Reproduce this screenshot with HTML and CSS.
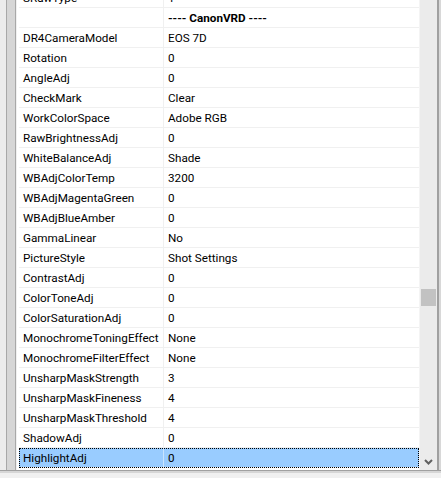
FILE: index.html
```html
<!DOCTYPE html>
<html>
<head>
<meta charset="utf-8">
<link rel="stylesheet" href="styles.css">
</head>
<body>
<div class="window">
  <div class="main">
    <div class="gutter"><div class="g-outer"></div><div class="g-inner"></div></div>
    <div class="list">
      <div class="rows">
        <div class="row"><div class="name">SRawType</div><div class="val">1</div></div>
        <div class="row"><div class="name"></div><div class="val header">---- CanonVRD ----</div></div>
        <div class="row"><div class="name">DR4CameraModel</div><div class="val">EOS 7D</div></div>
        <div class="row"><div class="name">Rotation</div><div class="val">0</div></div>
        <div class="row"><div class="name">AngleAdj</div><div class="val">0</div></div>
        <div class="row"><div class="name">CheckMark</div><div class="val">Clear</div></div>
        <div class="row"><div class="name">WorkColorSpace</div><div class="val">Adobe RGB</div></div>
        <div class="row"><div class="name">RawBrightnessAdj</div><div class="val">0</div></div>
        <div class="row"><div class="name">WhiteBalanceAdj</div><div class="val">Shade</div></div>
        <div class="row"><div class="name">WBAdjColorTemp</div><div class="val">3200</div></div>
        <div class="row"><div class="name">WBAdjMagentaGreen</div><div class="val">0</div></div>
        <div class="row"><div class="name">WBAdjBlueAmber</div><div class="val">0</div></div>
        <div class="row"><div class="name">GammaLinear</div><div class="val">No</div></div>
        <div class="row"><div class="name">PictureStyle</div><div class="val">Shot Settings</div></div>
        <div class="row"><div class="name">ContrastAdj</div><div class="val">0</div></div>
        <div class="row"><div class="name">ColorToneAdj</div><div class="val">0</div></div>
        <div class="row"><div class="name">ColorSaturationAdj</div><div class="val">0</div></div>
        <div class="row"><div class="name">MonochromeToningEffect</div><div class="val">None</div></div>
        <div class="row"><div class="name">MonochromeFilterEffect</div><div class="val">None</div></div>
        <div class="row"><div class="name">UnsharpMaskStrength</div><div class="val">3</div></div>
        <div class="row"><div class="name">UnsharpMaskFineness</div><div class="val">4</div></div>
        <div class="row"><div class="name">UnsharpMaskThreshold</div><div class="val">4</div></div>
        <div class="row"><div class="name">ShadowAdj</div><div class="val">0</div></div>
        <div class="row selected"><div class="name">HighlightAdj</div><div class="val">0</div></div>
      </div>
    </div>
    <div class="scrollbar">
      <div class="thumb"></div>
      <div class="arrow">
        <svg width="9" height="6" viewBox="0 0 9 6"><path d="M1 1 L4.5 4.5 L8 1" fill="none" stroke="#606060" stroke-width="2"/></svg>
      </div>
    </div>
    <div class="rborder"></div>
  </div>
  <div class="bottom"></div>
</div>
</body>
</html>
```

FILE: styles.css
```css
html, body {
  margin: 0;
  padding: 0;
  background: #f0f0f0;
}
.window {
  width: 441px;
  height: 478px;
  overflow: hidden;
  display: flex;
  flex-direction: column;
  font-family: Roboto, "Liberation Sans", Arial, sans-serif;
  font-size: 11.7px;
  color: #000;
}
.main {
  display: flex;
  height: 470px;
  flex: none;
}
.gutter {
  width: 17px;
  display: flex;
  flex: none;
  background: #f0f0f0;
}
.g-outer {
  width: 6px;
  background: #ececec;
}
.g-inner {
  width: 8px;
  border-left: 1px solid #a8a8a8;
  border-right: 1px solid #a8a8a8;
  background: #d6d6d6;
}
.list {
  flex: 1;
  background: #fff;
  overflow: hidden;
  padding-left: 2px;
  border-right: 1px solid #f4f4f4;
}
.rows {
  margin-top: -12px;
}
.row {
  display: flex;
  height: 19px;
  border-bottom: 1px solid #f0f0f0;
  line-height: 20px;
  box-sizing: content-box;
}
.name {
  width: 140px;
  padding-left: 4px;
  border-right: 1px solid #f0f0f0;
  white-space: nowrap;
  flex: none;
}
.val {
  padding-left: 4px;
  flex: 1;
  white-space: nowrap;
}
.header {
  font-weight: bold;
}
.row.selected {
  background: #99ccff;
  outline: 1px dotted #000;
  outline-offset: -1px;
}
.row.selected .name {
  border-right-color: #c8e4ff;
}
.scrollbar {
  width: 17px;
  flex: none;
  background: #ebebeb;
  position: relative;
}
.thumb {
  position: absolute;
  left: 1px;
  right: 1px;
  top: 289px;
  height: 17px;
  background: #c2c2c2;
}
.arrow {
  position: absolute;
  left: 0;
  right: 0;
  bottom: 3px;
  height: 10px;
  display: flex;
  align-items: center;
  justify-content: center;
}
.rborder {
  width: 4px;
  flex: none;
  border-left: 2px solid #a0a0a0;
  background: #d8d8d8;
  box-sizing: border-box;
}
.bottom {
  height: 8px;
  border-top: 1px solid #a0a0a0;
  background: linear-gradient(#d6d6d6 0 2px, #f0f0f0 2px);
}
```
